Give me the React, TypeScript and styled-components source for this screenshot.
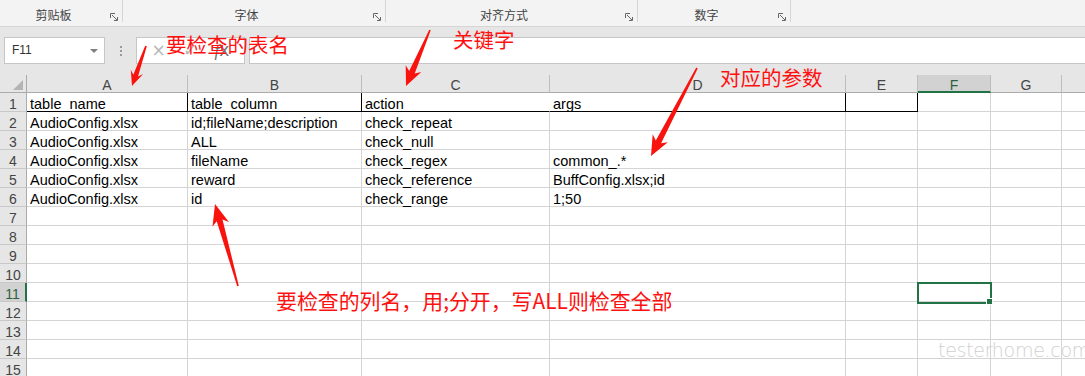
import React from "react";
import styled, { createGlobalStyle, css } from "styled-components";

const GREEN = "#217346";
const GRID = "#d4d4d4";

const GlobalStyle = createGlobalStyle`
  html, body {
    margin: 0;
    padding: 0;
    background: #fff;
    overflow: hidden;
  }
`;

interface RibbonGroupDef {
  label: string;
  width: number;
}

const GROUPS: RibbonGroupDef[] = [
  { label: "剪贴板", width: 123 },
  { label: "字体", width: 263 },
  { label: "对齐方式", width: 252 },
  { label: "数字", width: 153 }
];

// H runs past the right edge, so its letter stays out of view
const COLUMNS = [
  { key: "A", width: "161px" },
  { key: "B", width: "174px" },
  { key: "C", width: "188px" },
  { key: "D", width: "296px" },
  { key: "E", width: "72px" },
  { key: "F", width: "73px" },
  { key: "G", width: "71px" },
  { key: "H", width: "72px" }
];

const DATA: string[][] = [
  ["table_name", "table_column", "action", "args"],
  ["AudioConfig.xlsx", "id;fileName;description", "check_repeat", ""],
  ["AudioConfig.xlsx", "ALL", "check_null", ""],
  ["AudioConfig.xlsx", "fileName", "check_regex", "common_.*"],
  ["AudioConfig.xlsx", "reward", "check_reference", "BuffConfig.xlsx;id"],
  ["AudioConfig.xlsx", "id", "check_range", "1;50"]
];

const ROW_COUNT = 15;
const SELECTED_COL = "F";
const SELECTED_ROW = 11;

// borders of the header row (row 1): black frame from A to E, C|D left open
const HEADER_RIGHT: Record<string, "black" | "none" | undefined> = {
  A: "black",
  B: "black",
  C: "none",
  D: "black",
  E: "black"
};

type Point = [number, number];

interface ArrowDef {
  from: Point;
  to: Point;
  head: number;
  headLen: number;
  neck: number;
}

const ARROWS: ArrowDef[] = [
  { from: [146, 46], to: [132, 86], head: 13, headLen: 15, neck: 5 },
  { from: [430, 30], to: [406, 86], head: 17, headLen: 19, neck: 6 },
  { from: [697, 68], to: [651, 156], head: 17, headLen: 20, neck: 6 },
  { from: [238, 286], to: [215, 204], head: 17, headLen: 21, neck: 6 }
];

const arrowPoints = ({ from, to, head, headLen, neck }: ArrowDef) => {
  const [x1, y1] = from;
  const [x2, y2] = to;
  const len = Math.hypot(x2 - x1, y2 - y1);
  const ux = (x2 - x1) / len;
  const uy = (y2 - y1) / len;
  const px = -uy;
  const py = ux;
  const bx = x2 - ux * headLen;
  const by = y2 - uy * headLen;
  const pt = (x: number, y: number) => `${x.toFixed(1)},${y.toFixed(1)}`;
  return [
    pt(x1 + px * 0.8, y1 + py * 0.8),
    pt(bx + ux * 4 + (px * neck) / 2, by + uy * 4 + (py * neck) / 2),
    pt(bx + (px * head) / 2, by + (py * head) / 2),
    pt(x2, y2),
    pt(bx - (px * head) / 2, by - (py * head) / 2),
    pt(bx + ux * 4 - (px * neck) / 2, by + uy * 4 - (py * neck) / 2),
    pt(x1 - px * 0.8, y1 - py * 0.8)
  ].join(" ");
};

const LauncherIcon = () => (
  <LauncherSvg viewBox="0 0 8 8" width="8" height="8">
    <path d="M0.5 5V0.5H5" fill="none" stroke="#666" strokeWidth="1" />
    <path d="M2 2L7 7M7.5 4V7.5H4" fill="none" stroke="#666" strokeWidth="1" />
  </LauncherSvg>
);

const App = () => {
  return (
    <Screen>
      <GlobalStyle />
      <Ribbon>
        {GROUPS.map(group => (
          <RibbonGroup key={group.label} $width={group.width}>
            <GroupLabel>{group.label}</GroupLabel>
            <LauncherIcon />
          </RibbonGroup>
        ))}
      </Ribbon>

      <FormulaBar>
        <NameBox>
          F11
          <Caret />
        </NameBox>
        <Grip>
          <Dot />
          <Dot />
          <Dot />
        </Grip>
        <FxBox>
          <FxGlyph $muted>×</FxGlyph>
          <FxGlyph $muted>✓</FxGlyph>
          <FxGlyph>
            <i>f</i>x
          </FxGlyph>
        </FxBox>
        <FormulaInput />
      </FormulaBar>

      <Sheet>
        <CornerCell />
        {COLUMNS.map(col => (
          <ColumnHeader key={col.key} $active={col.key === SELECTED_COL}>
            {col.key}
          </ColumnHeader>
        ))}
        {Array.from({ length: ROW_COUNT }, (_, r) => {
          const rowNo = r + 1;
          const values = DATA[r] || [];
          return (
            <React.Fragment key={rowNo}>
              <RowHeader $active={rowNo === SELECTED_ROW}>{rowNo}</RowHeader>
              {COLUMNS.map((col, c) => (
                <Cell
                  key={col.key}
                  $right={rowNo === 1 ? HEADER_RIGHT[col.key] : undefined}
                  $under={rowNo === 1 && c < 5}
                  $selected={rowNo === SELECTED_ROW && col.key === SELECTED_COL}
                >
                  {values[c] || ""}
                </Cell>
              ))}
            </React.Fragment>
          );
        })}
      </Sheet>

      <Annotations>
        <ArrowLayer width="1085" height="376" viewBox="0 0 1085 376">
          {ARROWS.map((arrow, i) => (
            <polygon key={i} points={arrowPoints(arrow)} fill="#f8130f" />
          ))}
        </ArrowLayer>
        <Note $left={166} $top={34}>要检查的表名</Note>
        <Note $left={453} $top={29}>关键字</Note>
        <Note $left={720} $top={67}>对应的参数</Note>
        <Note $left={276} $top={290} $size={20.9}>
          要检查的列名，用;分开，写ALL则检查全部
        </Note>
        <Watermark>testerhome.com</Watermark>
      </Annotations>
    </Screen>
  );
};

export default App;

const Screen = styled.div`
  position: relative;
  width: 1085px;
  height: 376px;
  overflow: hidden;
  background: #fff;
  font-family: "Liberation Sans", Arial, "Noto Sans CJK SC", sans-serif;
`;

const Ribbon = styled.div`
  display: flex;
  height: 27px;
  box-sizing: border-box;
  background: #f3f3f3;
  border-bottom: 1px solid #d5d5d5;
`;

const RibbonGroup = styled.div<{ $width: number }>`
  display: flex;
  flex: 0 0 ${props => props.$width}px;
  height: 22px;
  box-sizing: border-box;
  border-right: 1px solid #d5d5d5;
`;

const GroupLabel = styled.span`
  flex: 1;
  padding: 7px 3px 0 0;
  text-align: center;
  font: 12px/16px "Noto Sans CJK SC", sans-serif;
  color: #444;
`;

const LauncherSvg = styled.svg`
  align-self: flex-end;
  margin: 0 4px 1px 0;
`;

const FormulaBar = styled.div`
  display: flex;
  align-items: stretch;
  height: 48px;
  box-sizing: border-box;
  padding: 10px 0 11px 4px;
  background: #e6e6e6;
`;

const NameBox = styled.div`
  position: relative;
  flex: 0 0 101px;
  box-sizing: border-box;
  padding-left: 7px;
  border: 1px solid #c6c6c6;
  background: #fff;
  font: 12px/25px "Liberation Sans", Arial, sans-serif;
  color: #333;
`;

const Caret = styled.span`
  position: absolute;
  right: 6px;
  top: 11px;
  border-left: 4px solid transparent;
  border-right: 4px solid transparent;
  border-top: 4px solid #808080;
`;

const Grip = styled.div`
  flex: 0 0 31px;
  display: flex;
  flex-direction: column;
  align-items: center;
  justify-content: center;
  gap: 2px;
`;

const Dot = styled.span`
  width: 2px;
  height: 2px;
  background: #9a9a9a;
`;

const FxBox = styled.div`
  flex: 0 0 109px;
  display: flex;
  align-items: center;
  justify-content: space-around;
  box-sizing: border-box;
  padding: 0 6px;
  margin-right: 4px;
  border: 1px solid #c6c6c6;
  background: #fff;
`;

const FxGlyph = styled.span<{ $muted?: boolean }>`
  font: 17px/1 "DejaVu Sans", sans-serif;
  color: ${props => (props.$muted ? "#b8b8b8" : "#707070")};
  i {
    font-family: "Liberation Serif", serif;
  }
`;

const FormulaInput = styled.div`
  flex: 1;
  border: 1px solid #c6c6c6;
  border-right: none;
  background: #fff;
`;

const Sheet = styled.div`
  display: grid;
  width: max-content;
  grid-template-columns: 27px ${COLUMNS.map(col => col.width).join(" ")};
  grid-template-rows: 18px;
  grid-auto-rows: 19px;
`;

const HeaderBase = css`
  position: relative;
  box-sizing: border-box;
  background: #e6e6e6;
  font: 14px/15px "Liberation Sans", Arial, sans-serif;
  color: #444;
  text-align: center;
`;

const CornerCell = styled.div`
  ${HeaderBase};
  border-right: 1px solid #ababab;
  border-bottom: 1px solid #ababab;
  &::after {
    content: "";
    position: absolute;
    right: 3px;
    bottom: 2px;
    border-left: 10px solid transparent;
    border-bottom: 10px solid #b4b4b4;
  }
`;

const ColumnHeader = styled.div<{ $active?: boolean }>`
  ${HeaderBase};
  padding-top: 3px;
  border-right: 1px solid #bdbdbd;
  border-bottom: ${props =>
    props.$active ? `2px solid ${GREEN}` : "1px solid #ababab"};
  background: ${props => (props.$active ? "#d2d2d2" : "#e6e6e6")};
  color: ${props => (props.$active ? "#2f5f3a" : "#444")};
`;

const RowHeader = styled.div<{ $active?: boolean }>`
  ${HeaderBase};
  padding-top: 4px;
  border-right: ${props =>
    props.$active ? `2px solid ${GREEN}` : "1px solid #ababab"};
  border-bottom: 1px solid #c8c8c8;
  background: ${props => (props.$active ? "#d2d2d2" : "#e6e6e6")};
  color: ${props => (props.$active ? "#2f5f3a" : "#444")};
`;

interface CellProps {
  $right?: "black" | "none";
  $under?: boolean;
  $selected?: boolean;
}

const Cell = styled.div<CellProps>`
  position: relative;
  box-sizing: border-box;
  padding: 4px 0 0 3px;
  border-right: 1px solid
    ${props =>
      props.$right === "black" ? "#000" : props.$right === "none" ? "#fff" : GRID};
  border-bottom: 1px solid ${props => (props.$under ? "#000" : GRID)};
  font: 14.5px/15px "Liberation Sans", Arial, sans-serif;
  color: #000;
  white-space: nowrap;
  ${props =>
    props.$selected &&
    css`
      &::before {
        content: "";
        position: absolute;
        left: -1px;
        top: -1px;
        right: -2px;
        bottom: -3px;
        border: 2px solid ${GREEN};
        z-index: 2;
      }
      &::after {
        content: "";
        position: absolute;
        right: -3px;
        bottom: -4px;
        width: 5px;
        height: 5px;
        background: ${GREEN};
        border: 1px solid #fff;
        z-index: 3;
      }
    `}
`;

const Annotations = styled.div`
  position: absolute;
  inset: 0;
  pointer-events: none;
  z-index: 5;
`;

const ArrowLayer = styled.svg`
  position: absolute;
  left: 0;
  top: 0;
`;

const Note = styled.div<{ $left: number; $top: number; $size?: number }>`
  position: absolute;
  left: ${props => props.$left}px;
  top: ${props => props.$top}px;
  font: ${props => props.$size || 20.5}px/1 "Noto Sans CJK SC", sans-serif;
  color: #ff1010;
  white-space: nowrap;
`;

const Watermark = styled.div`
  position: absolute;
  left: 938px;
  top: 341px;
  font: 200 19px/1 "DejaVu Sans", sans-serif;
  letter-spacing: -0.3px;
  color: #d0d0d0;
  white-space: nowrap;
`;
